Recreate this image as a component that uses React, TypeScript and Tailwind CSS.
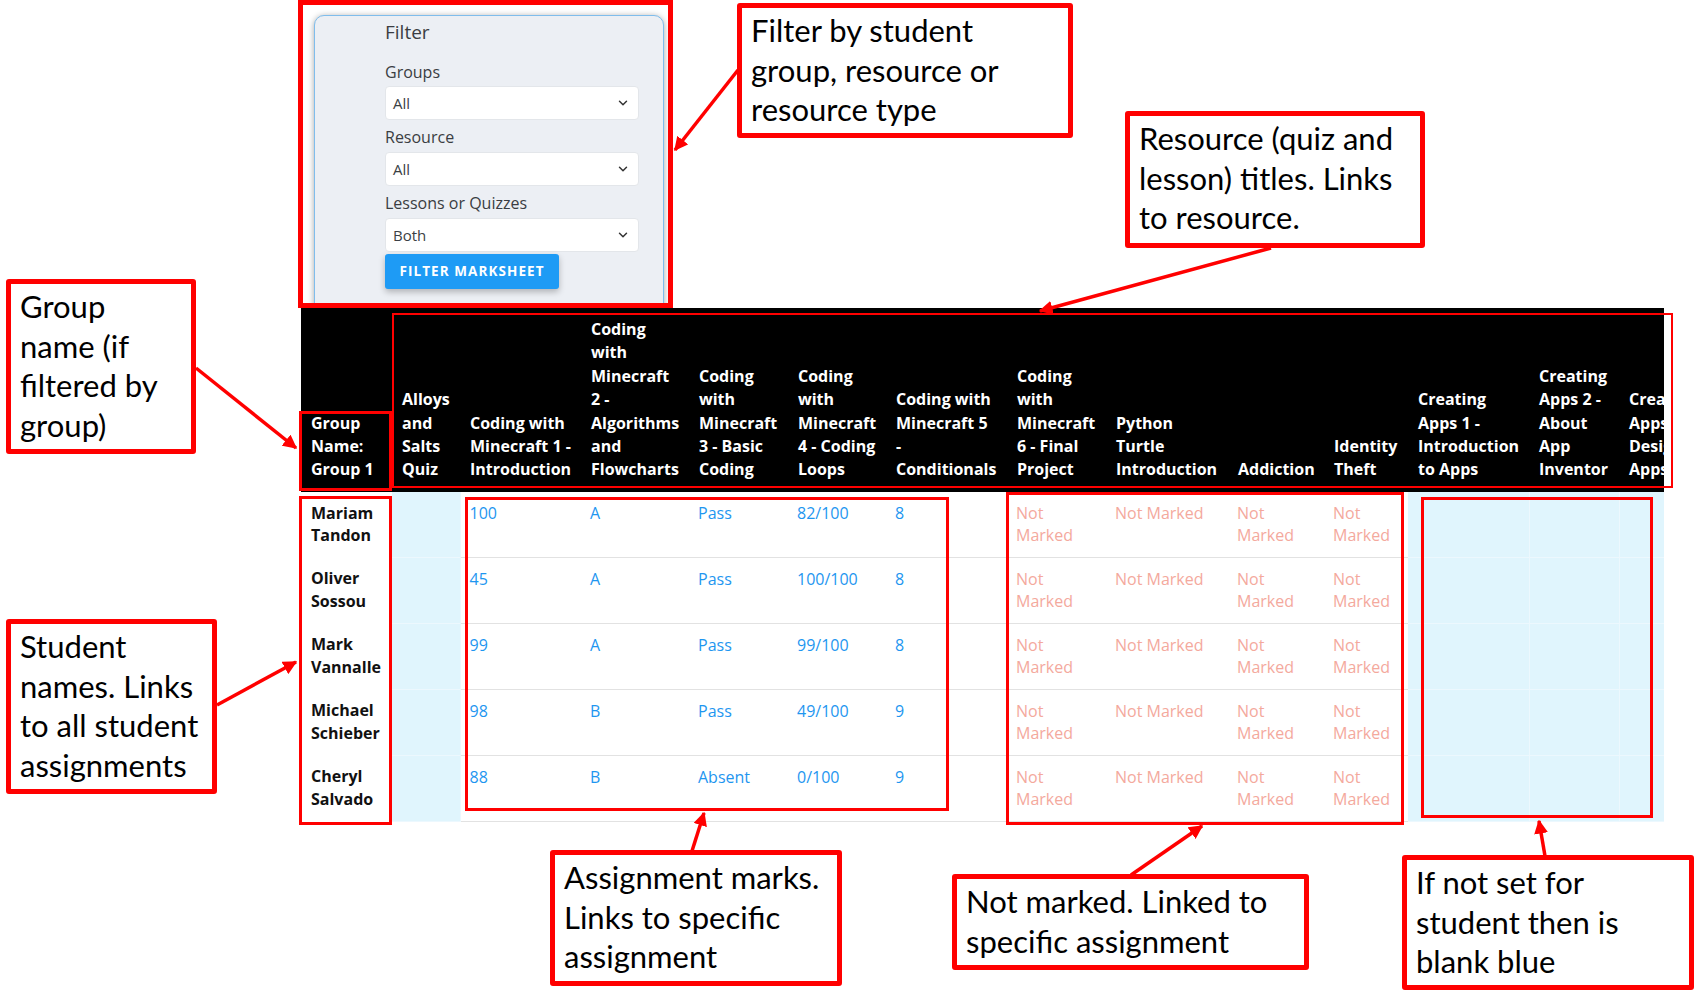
import React from "react";
import { ChevronDown } from "lucide-react";

const colWidths = [91, 68, 121, 108, 99, 98, 121, 99, 122, 96, 84, 121, 90, 110];

const headers: string[][] = [
  ["Group", "Name:", "Group 1"],
  ["Alloys", "and", "Salts", "Quiz"],
  ["Coding with", "Minecraft 1 -", "Introduction"],
  ["Coding", "with", "Minecraft", "2 -", "Algorithms", "and", "Flowcharts"],
  ["Coding", "with", "Minecraft", "3 - Basic", "Coding"],
  ["Coding", "with", "Minecraft", "4 - Coding", "Loops"],
  ["Coding with", "Minecraft 5", "-", "Conditionals"],
  ["Coding", "with", "Minecraft", "6 - Final", "Project"],
  ["Python", "Turtle", "Introduction"],
  ["Addiction"],
  ["Identity", "Theft"],
  ["Creating", "Apps 1 -", "Introduction", "to Apps"],
  ["Creating", "Apps 2 -", "About", "App", "Inventor"],
  ["Creating", "Apps 3 -", "Designing", "Apps"],
];

const rows = [
  { name: ["Mariam", "Tandon"], marks: ["100", "A", "Pass", "82/100", "8"] },
  { name: ["Oliver", "Sossou"], marks: ["45", "A", "Pass", "100/100", "8"] },
  { name: ["Mark", "Vannalle"], marks: ["99", "A", "Pass", "99/100", "8"] },
  { name: ["Michael", "Schieber"], marks: ["98", "B", "Pass", "49/100", "9"] },
  { name: ["Cheryl", "Salvado"], marks: ["88", "B", "Absent", "0/100", "9"] },
];

const notMarked: string[][] = [["Not", "Marked"], ["Not Marked"], ["Not", "Marked"], ["Not", "Marked"]];

function Lines({ lines }: { lines: string[] }) {
  return (
    <>
      {lines.map((l, i) => (
        <div key={i} className="whitespace-nowrap">
          {l}
        </div>
      ))}
    </>
  );
}

function SelectBox({ value }: { value: string }) {
  return (
    <div className="flex h-[34px] w-[254px] items-center justify-between rounded-[4px] border border-[#e3e6ea] bg-white pl-[7px] pr-[8px] text-[15px] text-[#3b3f44]">
      <span>{value}</span>
      <ChevronDown size={14} strokeWidth={2.5} className="text-[#333]" />
    </div>
  );
}

function Callout({
  className,
  lines,
}: {
  className: string;
  lines: string[];
}) {
  return (
    <div
      className={`absolute rounded-[3px] border-[5px] border-[#ff0000] bg-white pl-[9px] pt-[3px] text-[31px] leading-[39.5px] text-black ${className}`}
      style={{ fontFamily: "Lato, 'Open Sans', sans-serif" }}
    >
      {lines.map((l, i) => (
        <div key={i} className="whitespace-nowrap">
          {l}
        </div>
      ))}
    </div>
  );
}

export default function App() {
  return (
    <div
      className="relative h-[1001px] w-[1696px] overflow-hidden bg-white"
      style={{ fontFamily: "'Open Sans', 'Noto Sans', sans-serif" }}
    >
      {/* Filter panel area */}
      <div className="h-[308px] overflow-hidden pl-[314px] pt-[15px]">
        <div className="flex h-[320px] w-[350px] flex-col items-start rounded-[10px] border border-[#7fbdec] bg-[#eceff4] pl-[70px] pr-[25px] pt-[2px] shadow-[0_1px_6px_rgba(0,0,0,0.35)]">
          <div className="text-[19px] leading-[28px] text-[#3a3d42]">Filter</div>
          <div className="mt-[14px] text-[16px] leading-[24px] text-[#3a3d42]">Groups</div>
          <div className="mt-[2px]">
            <SelectBox value="All" />
          </div>
          <div className="mt-[5px] text-[16px] leading-[24px] text-[#3a3d42]">Resource</div>
          <div className="mt-[3px]">
            <SelectBox value="All" />
          </div>
          <div className="mt-[5px] text-[16px] leading-[24px] text-[#3a3d42]">Lessons or Quizzes</div>
          <div className="mt-[3px]">
            <SelectBox value="Both" />
          </div>
          <button className="mt-[2px] flex h-[35px] w-[174px] items-center justify-center rounded-[3px] bg-[#1e9bf5] text-[13.5px] font-bold tracking-[0.08em] text-white shadow-[0_3px_6px_rgba(0,0,0,0.25)]">
            FILTER MARKSHEET
          </button>
        </div>
      </div>

      {/* Marksheet table */}
      <div className="ml-[301px] w-[1363px] overflow-hidden">
        <table className="table-fixed border-collapse" style={{ width: colWidths.reduce((a, b) => a + b, 0) }}>
          <colgroup>
            {colWidths.map((w, i) => (
              <col key={i} style={{ width: w }} />
            ))}
          </colgroup>
          <thead>
            <tr className="bg-black">
              {headers.map((h, i) => (
                <th
                  key={i}
                  className="overflow-hidden px-[10px] pb-[10px] pt-[10px] text-left align-bottom text-[16px] font-bold leading-[23.4px] text-white"
                >
                  <Lines lines={h} />
                </th>
              ))}
            </tr>
          </thead>
          <tbody>
            {rows.map((r, ri) => (
              <tr key={ri}>
                <td className="px-[10px] py-[10px] align-top text-[16px] font-bold leading-[22.5px] text-[#111]">
                  <Lines lines={r.name} />
                </td>
                <td className="border-b border-r border-[#ecf8fe] bg-[#e0f5fd]" />
                {r.marks.map((m, mi) => (
                  <td
                    key={mi}
                    className="border-b border-[#e2e2e2] px-[9px] py-[10px] align-top text-[16px] leading-[22.5px] text-[#1e96f0]"
                  >
                    {m}
                  </td>
                ))}
                {notMarked.map((n, ni) => (
                  <td
                    key={ni}
                    className="border-b border-[#e2e2e2] px-[9px] py-[10px] align-top text-[16px] leading-[22.5px] text-[#f4a99d]"
                  >
                    <Lines lines={n} />
                  </td>
                ))}
                <td className="border-b border-r border-[#ecf8fe] bg-[#e0f5fd]" />
                <td className="border-b border-r border-[#ecf8fe] bg-[#e0f5fd]" />
                <td className="border-b border-r border-[#ecf8fe] bg-[#e0f5fd]" />
              </tr>
            ))}
          </tbody>
        </table>
      </div>

      {/* Highlight boxes (annotation overlays) */}
      <div className="absolute left-[298px] top-[0px] h-[308px] w-[375px] border-[5px] border-[#ff0000]" />
      <div className="absolute left-[299px] top-[411px] h-[80px] w-[93px] border-[3px] border-[#ff0000]" />
      <div className="absolute left-[392px] top-[313px] h-[175px] w-[1281px] border-[2px] border-[#ff0000]" />
      <div className="absolute left-[299px] top-[496px] h-[329px] w-[93px] border-[3px] border-[#ff0000]" />
      <div className="absolute left-[465px] top-[497px] h-[314px] w-[484px] border-[3px] border-[#ff0000]" />
      <div className="absolute left-[1006px] top-[492px] h-[333px] w-[398px] border-[3px] border-[#ff0000]" />
      <div className="absolute left-[1421px] top-[497px] h-[321px] w-[232px] border-[3px] border-[#ff0000]" />

      {/* Arrows */}
      <svg className="pointer-events-none absolute left-0 top-0" width="1696" height="1001">
        <defs>
          <marker id="ah" viewBox="0 0 10 10" refX="9" refY="5" markerWidth="4" markerHeight="4" orient="auto">
            <path d="M0,0 L10,5 L0,10 z" fill="#ff0000" />
          </marker>
        </defs>
        <g stroke="#ff0000" strokeWidth="3.5" fill="none">
          <line x1="738" y1="70" x2="675" y2="150" markerEnd="url(#ah)" />
          <line x1="1271" y1="248" x2="1040" y2="311" markerEnd="url(#ah)" />
          <line x1="196" y1="368" x2="296" y2="448" markerEnd="url(#ah)" />
          <line x1="217" y1="705" x2="296" y2="662" markerEnd="url(#ah)" />
          <line x1="692" y1="851" x2="704" y2="813" markerEnd="url(#ah)" />
          <line x1="1131" y1="875" x2="1202" y2="826" markerEnd="url(#ah)" />
          <line x1="1545" y1="856" x2="1539" y2="821" markerEnd="url(#ah)" />
        </g>
      </svg>

      {/* Callouts */}
      <Callout className="left-[737px] top-[3px] h-[135px] w-[336px]" lines={["Filter by student", "group, resource or", "resource type"]} />
      <Callout className="left-[1125px] top-[111px] h-[137px] w-[300px]" lines={["Resource (quiz and", "lesson) titles. Links", "to resource."]} />
      <Callout className="left-[6px] top-[279px] h-[175px] w-[190px]" lines={["Group", "name (if", "filtered by", "group)"]} />
      <Callout className="left-[6px] top-[619px] h-[175px] w-[211px]" lines={["Student", "names. Links", "to all student", "assignments"]} />
      <Callout className="left-[550px] top-[850px] h-[136px] w-[292px]" lines={["Assignment marks.", "Links to specific", "assignment"]} />
      <Callout className="left-[952px] top-[874px] h-[96px] w-[357px]" lines={["Not marked. Linked to", "specific assignment"]} />
      <Callout className="left-[1402px] top-[855px] h-[135px] w-[292px]" lines={["If not set for", "student then is", "blank blue"]} />
    </div>
  );
}
